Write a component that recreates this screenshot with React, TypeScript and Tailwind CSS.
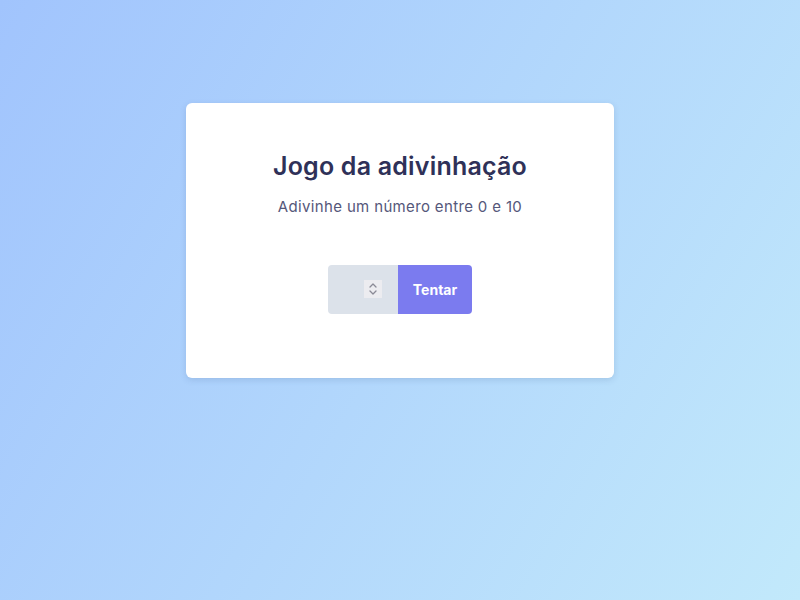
import React, { useState } from 'react';

const App: React.FC = () => {
  const [guess, setGuess] = useState('');

  return (
    <div className="min-h-screen w-full bg-[linear-gradient(120deg,#a1c4fd_0%,#c2e9fb_100%)] pt-[103px] font-['Inter',sans-serif]">
      <div className="mx-auto w-[428px] h-[275px] rounded-md bg-white shadow-[0_2px_6px_rgba(60,90,140,0.18)] flex flex-col items-center pt-[48px]">
        <h1 className="text-[25px] leading-[30px] font-semibold text-[#2f3158] tracking-[0.2px]">
          Jogo da adivinhação
        </h1>
        <p className="mt-[16px] text-[15px] leading-[20px] text-[#55577a] tracking-[0.35px]">
          Adivinhe um número entre 0 e 10
        </p>
        <form
          className="mt-[48px] flex"
          onSubmit={(e) => {
            e.preventDefault();
          }}
        >
          <div className="relative">
            <input
              type="number"
              min={0}
              max={10}
              value={guess}
              onChange={(e) => setGuess(e.target.value)}
              className="w-[70px] h-[49px] rounded-l bg-[#dce2ea] px-3 text-[15px] text-[#2f3158] outline-none [appearance:textfield] [&::-webkit-inner-spin-button]:appearance-none [&::-webkit-outer-spin-button]:appearance-none"
            />
            {/* spin buttons */}
            <div className="pointer-events-none absolute left-[36px] top-[15px] w-[18px] h-[18px] bg-[#ececf0] flex items-center justify-center">
              <svg width="10" height="14" viewBox="0 0 10 14" fill="none" stroke="#8a8a96" strokeWidth="1.3" strokeLinecap="round" strokeLinejoin="round">
                <path d="M2 5 L5 2 L8 5" />
                <path d="M2 9 L5 12 L8 9" />
              </svg>
            </div>
          </div>
          <button
            type="submit"
            className="w-[74px] h-[49px] rounded-r bg-[#7b7bef] text-white text-[14px] font-bold"
          >
            Tentar
          </button>
        </form>
      </div>
    </div>
  );
};

export default App;
